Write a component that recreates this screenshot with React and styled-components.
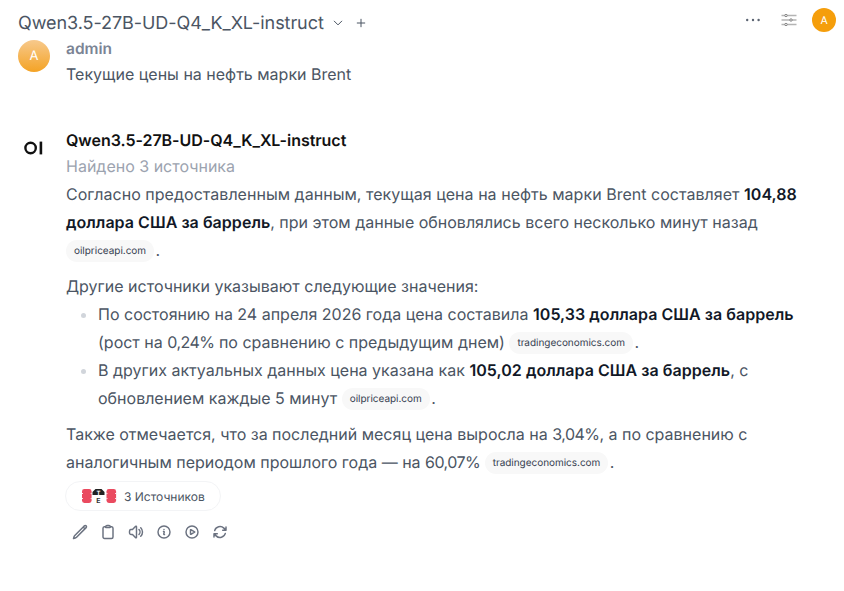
import React from "react";
import styled, { createGlobalStyle } from "styled-components";
import {
  HiOutlinePencil,
  HiOutlineClipboard,
  HiOutlineSpeakerWave,
  HiOutlineInformationCircle,
  HiOutlinePlayCircle,
  HiOutlineArrowPath,
  HiOutlineChevronDown,
  HiOutlinePlus,
} from "react-icons/hi2";

const Global = createGlobalStyle`
  html, body { margin: 0; padding: 0; background: #fff; }
  body { font-family: Inter, "Liberation Sans", sans-serif; color: #4b5563; text-rendering: geometricPrecision; }
  * { box-sizing: border-box; }
`;

const Page = styled.div`
  width: 844px;
  height: 591px;
  overflow: hidden;
  display: flex;
  flex-direction: column;
`;

const Header = styled.header`
  height: 40px;
  flex: none;
  display: flex;
  align-items: center;
  padding: 6px 8px 0 18px;
`;

const Title = styled.div`
  font-size: 18px;
  line-height: 28px;
  letter-spacing: -0.065px;
  color: #4b5563;
  margin-top: 1px;
`;

const TitleIcon = styled.span`
  display: flex;
  color: #4b5563;
  margin-left: ${(p) => p.$gap}px;
  margin-top: -1px;
  & svg { width: 12px; height: 12px; stroke-width: 2; }
`;

const HeaderRight = styled.div`
  margin-left: auto;
  display: flex;
  align-items: center;
  margin-top: -6px;
`;

const DotsIcon = styled.svg`
  display: block;
  width: 16px;
  height: 4px;
  margin-right: 20px;
`;

const SlidersIcon = styled.svg`
  display: block;
  width: 16px;
  height: 12px;
  margin-right: 15px;
`;

const UserAvatar = styled.div`
  width: 24px;
  height: 24px;
  border-radius: 50%;
  background: #f59e0b;
  color: #fff;
  font-size: 10.5px;
  display: flex;
  align-items: center;
  justify-content: center;
`;

const Message = styled.section`
  display: flex;
  padding-left: 18px;
  margin-top: ${(p) => p.$top}px;
`;

const AvatarCol = styled.div`
  width: 48px;
  flex: none;
  padding-top: ${(p) => p.$top}px;
`;

const Avatar = styled.div`
  width: 32px;
  height: 32px;
  border-radius: 50%;
  background: linear-gradient(180deg, #f7c98c 0%, #f4a325 100%);
  color: #fff;
  font-size: 13px;
  display: flex;
  align-items: center;
  justify-content: center;
`;

const Logo = styled.svg`
  display: block;
  width: 20px;
  height: 14px;
  margin-left: 6px;
`;

const Body = styled.div`
  width: 744px;
`;

const UserName = styled.div`
  font-size: 15.5px;
  font-weight: 600;
  line-height: 20px;
  color: #7b8494;
  margin-top: -1px;
`;

const UserText = styled.div`
  font-size: 16px;
  line-height: 24px;
  color: #4b5563;
  margin-top: 3px;
`;

const ModelName = styled.div`
  font-size: 16px;
  font-weight: 600;
  line-height: 24px;
  letter-spacing: -0.03px;
  color: #111;
  margin-top: -1px;
`;

const Status = styled.div`
  font-size: 16px;
  line-height: 24px;
  color: #9ca3af;
  margin-top: 2px;
`;

const Para = styled.p`
  margin: ${(p) => p.$top ?? 0}px 0 0;
  font-size: 16px;
  line-height: 28px;
  color: #4b5563;
`;

const Wide = styled.span`
  letter-spacing: 0.025px;
`;

const Percent = styled.span`
  letter-spacing: -0.55px;
`;

const Strong = styled.strong`
  font-weight: 600;
  letter-spacing: 0.04px;
  color: #111827;
`;

const List = styled.ul`
  margin: 0;
  padding: 0 0 0 32px;
  list-style: disc;
`;

const Item = styled.li`
  font-size: 16px;
  line-height: 28px;
  color: #4b5563;
  &::marker { color: #d1d5db; }
`;

const Chip = styled.span`
  display: inline-flex;
  align-items: center;
  height: 22px;
  padding: 0 8px;
  margin-right: -3px;
  border-radius: 11px;
  background: #f8f8f8;
  font-size: 10px;
  line-height: 22px;
  letter-spacing: -0.03px;
  color: #374151;
  vertical-align: 2.5px;
`;

const SourcesPill = styled.div`
  display: inline-flex;
  align-items: center;
  height: 30px;
  margin-top: 5px;
  margin-left: -1px;
  padding: 0 15px 0 16px;
  border: 1px solid #f3f4f6;
  border-radius: 15px;
  font-size: 12px;
  color: #4b5563;
`;

const Favicons = styled.svg`
  width: 36px;
  height: 16px;
  margin-right: 6px;
`;

const Actions = styled.div`
  display: flex;
  gap: 12px;
  margin-top: 13px;
  margin-left: 6px;
  color: #6b7280;
  & svg { width: 16px; height: 16px; stroke-width: 2.2; display: block; }
`;

const RedIcon = ({ x }) => (
  <g>
    <rect x={x} y="1" width="9.6" height="14" rx="2.4" fill="#ea4a5f" />
    <path
      d={`M${x} 5h0.9v1h-0.9zM${x} 10h0.9v1h-0.9zM${x + 8.7} 5h0.9v1h-0.9zM${x + 8.7} 10h0.9v1h-0.9z`}
      fill="#fff"
    />
  </g>
);

export default function App() {
  return (
    <Page>
      <Global />
      <Header>
        <Title>Qwen3.5-27B-UD-Q4_K_XL-instruct</Title>
        <TitleIcon $gap={8}><HiOutlineChevronDown /></TitleIcon>
        <TitleIcon $gap={11}><HiOutlinePlus /></TitleIcon>
        <HeaderRight>
          <DotsIcon viewBox="0 0 16 4" aria-hidden="true">
            <circle cx="2.2" cy="2" r="1.2" fill="#5b6472" />
            <circle cx="8" cy="2" r="1.2" fill="#5b6472" />
            <circle cx="13.6" cy="2" r="1.2" fill="#5b6472" />
          </DotsIcon>
          <SlidersIcon viewBox="0 0 16 12" aria-hidden="true">
            <g stroke="#b4b4b4" strokeWidth="1.3">
              <path d="M0.5 1.5H15.5M0.5 6H15.5M0.5 10.5H15.5" />
            </g>
            <g fill="#fff" stroke="#808080" strokeWidth="1">
              <circle cx="5" cy="1.5" r="1.2" />
              <circle cx="10" cy="6" r="1.2" />
              <circle cx="5" cy="10.5" r="1.2" />
            </g>
          </SlidersIcon>
          <UserAvatar>A</UserAvatar>
        </HeaderRight>
      </Header>

      <Message $top={0}>
        <AvatarCol $top={0}><Avatar>A</Avatar></AvatarCol>
        <Body>
          <UserName>admin</UserName>
          <UserText>Текущие цены на нефть марки Brent</UserText>
        </Body>
      </Message>

      <Message $top={43}>
        <AvatarCol $top={12}>
          <Logo viewBox="0 0 20 14" aria-hidden="true">
            <circle cx="6.6" cy="7" r="5.2" fill="none" stroke="#111" strokeWidth="2.4" />
            <rect x="15.6" y="0.6" width="2.6" height="12.8" fill="#111" />
          </Logo>
        </AvatarCol>
        <Body>
          <ModelName>Qwen3.5-27B-UD-Q4_K_XL-instruct</ModelName>
          <Status>Найдено 3 источника</Status>
          <Para $top={2}>
            <Wide>Согласно предоставленным данным, текущая цена на нефть марки Brent составляет</Wide>{" "}
            <Strong>104,88 доллара США за баррель</Strong>, при этом данные обновлялись всего несколько минут назад{" "}
            <Chip>oilpriceapi.com</Chip> .
          </Para>
          <Para $top={8}>Другие источники указывают следующие значения:</Para>
          <List>
            <Item>
              По состоянию на 24 апреля 2026 года цена составила <Strong>105,33 доллара США за баррель</Strong> (рост на <Percent>0,24%</Percent> по сравнению с предыдущим днем) <Chip>tradingeconomics.com</Chip> .
            </Item>
            <Item>
              В других актуальных данных цена указана как <Strong>105,02 доллара США за баррель</Strong>, с обновлением каждые 5 минут <Chip>oilpriceapi.com</Chip> .
            </Item>
          </List>
          <Para $top={8}>
            Также отмечается, что за последний месяц цена выросла на <Percent>3,04%</Percent>, а по сравнению с аналогичным периодом прошлого года — на <Percent>60,07%</Percent> <Chip>tradingeconomics.com</Chip> .
          </Para>
          <SourcesPill>
            <Favicons viewBox="0 0 36 16" aria-hidden="true">
              <RedIcon x={0} />
              <path d="M10.5 4 l3-3 h6 l3 3 v3 h-12z" fill="#222" />
              <rect x="12.5" y="7" width="8" height="8" fill="#fff" />
              <text x="16.5" y="7" fontSize="6" fontWeight="700" fill="#fff" textAnchor="middle" fontFamily="Inter">T</text>
              <text x="16.5" y="14.5" fontSize="7" fontWeight="700" fill="#333" textAnchor="middle" fontFamily="Inter">E</text>
              <RedIcon x={24.5} />
            </Favicons>
            3 Источников
          </SourcesPill>
          <Actions>
            <HiOutlinePencil />
            <HiOutlineClipboard />
            <HiOutlineSpeakerWave />
            <HiOutlineInformationCircle />
            <HiOutlinePlayCircle />
            <HiOutlineArrowPath />
          </Actions>
        </Body>
      </Message>
    </Page>
  );
}
